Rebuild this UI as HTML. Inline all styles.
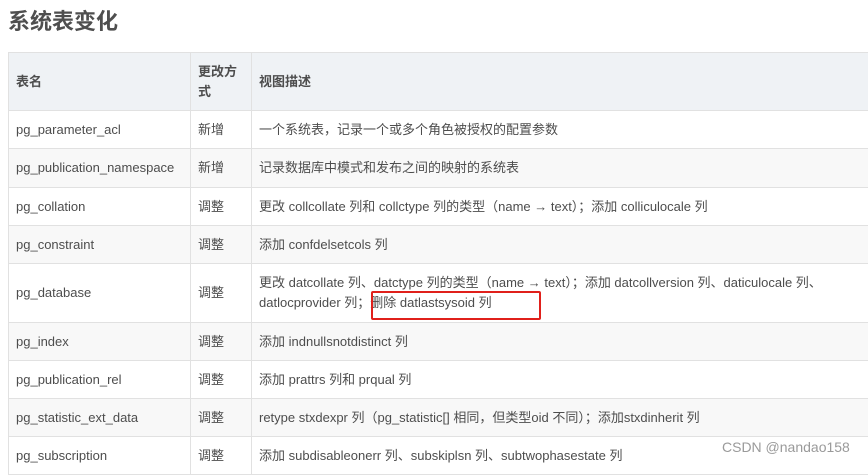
<!DOCTYPE html>
<html><head><meta charset="utf-8"><style>
body{margin:0;width:868px;height:464px;overflow:hidden;background:#fff;font-family:"Liberation Sans","Noto Sans CJK SC",sans-serif;color:#4d4d4d;position:relative}
h2{position:absolute;left:8px;top:4px;margin:0;font-size:22px;font-weight:bold;color:#4f4f4f;line-height:36px}
table{position:absolute;left:8px;top:52px;border-collapse:collapse;font-size:13px;width:880px}
td,th{border:1px solid #e1e1e1;padding:0 8px 0 7px;text-align:left;vertical-align:middle;line-height:20px}
th{background:#eff2f5;font-weight:bold;height:57px}
tr.s td{background:#f8f8f8}
.box{position:absolute;left:371px;top:291px;width:166px;height:25px;border:2px solid #e0201b;border-radius:2px}
.wm{position:absolute;left:722px;top:439px;font-size:14px;color:#9a9a9a}
</style></head><body>
<h2>系统表变化</h2>
<table>
<tr><th style="width:166px">表名</th><th style="width:45px">更改方<br>式</th><th>视图描述</th></tr>
<tr><td style="height:37px">pg_parameter_acl</td><td>新增</td><td>一个系统表，记录一个或多个角色被授权的配置参数</td></tr>
<tr class="s"><td style="height:38px">pg_publication_namespace</td><td>新增</td><td>记录数据库中模式和发布之间的映射的系统表</td></tr>
<tr><td style="height:37px">pg_collation</td><td>调整</td><td>更改 collcollate 列和 collctype 列的类型（name → text）；添加 colliculocale 列</td></tr>
<tr class="s"><td style="height:37px">pg_constraint</td><td>调整</td><td>添加 confdelsetcols 列</td></tr>
<tr><td style="height:58px">pg_database</td><td>调整</td><td>更改 datcollate 列、datctype 列的类型（name → text）；添加 datcollversion 列、daticulocale 列、<br>datlocprovider 列；删除 datlastsysoid 列</td></tr>
<tr class="s"><td style="height:37px">pg_index</td><td>调整</td><td>添加 indnullsnotdistinct 列</td></tr>
<tr><td style="height:37px">pg_publication_rel</td><td>调整</td><td>添加 prattrs 列和 prqual 列</td></tr>
<tr class="s"><td style="height:37px">pg_statistic_ext_data</td><td>调整</td><td>retype stxdexpr 列（pg_statistic[] 相同，但类型oid 不同）；添加stxdinherit 列</td></tr>
<tr><td style="height:37px">pg_subscription</td><td>调整</td><td>添加 subdisableonerr 列、subskiplsn 列、subtwophasestate 列</td></tr>
</table>
<div class="box"></div>
<div class="wm">CSDN @nandao158</div>
</body></html>
